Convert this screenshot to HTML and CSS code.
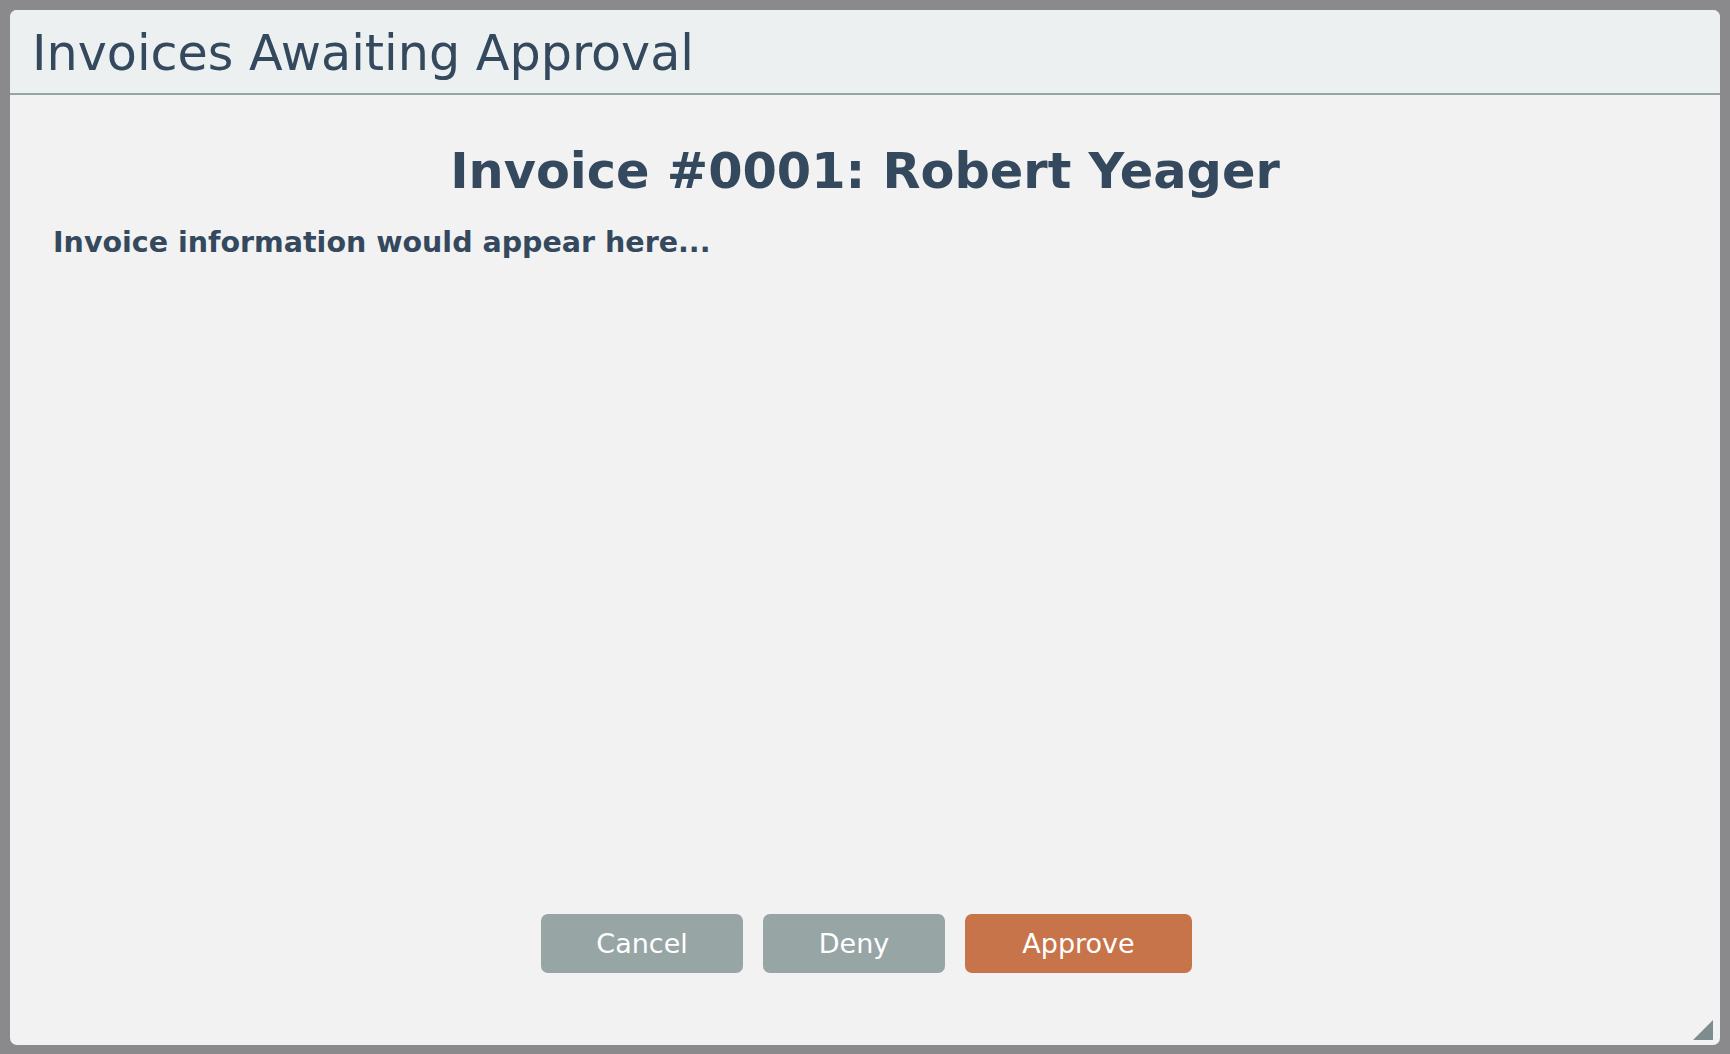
FILE: index.html
```html
<!DOCTYPE html>
<html lang="en">
<head>
<meta charset="utf-8">
<title>Invoices Awaiting Approval</title>
<link rel="stylesheet" href="styles.css">
</head>
<body>
<div class="dialog">
  <div class="dialog-header">
    <h1 class="dialog-title">Invoices Awaiting Approval</h1>
  </div>
  <div class="dialog-body">
    <h2 class="invoice-title">Invoice #0001: Robert Yeager</h2>
    <p class="invoice-info">Invoice information would appear here...</p>
  </div>
  <div class="dialog-footer">
    <button class="btn btn-muted">Cancel</button>
    <button class="btn btn-muted btn-deny">Deny</button>
    <button class="btn btn-primary">Approve</button>
  </div>
  <div class="resize-handle"></div>
</div>
</body>
</html>
```
FILE: styles.css
```css
html, body {
  margin: 0;
  padding: 0;
  height: 100%;
}
body {
  background: #8a8a8c;
  font-family: "DejaVu Sans", Verdana, sans-serif;
  color: #34495e;
  padding: 10px;
  box-sizing: border-box;
}
.dialog {
  position: relative;
  height: 1035px;
  background: #f2f2f2;
  border-radius: 7px;
  overflow: hidden;
  display: flex;
  flex-direction: column;
}
.dialog-header {
  background: #ecf0f1;
  border-bottom: 2px solid #95a5a6;
  padding: 15px 22px 0;
  height: 68px;
}
.dialog-title {
  margin: 0;
  font-size: 49.2px;
  font-weight: normal;
  line-height: 57px;
  color: #34495e;
}
.dialog-body {
  flex: 1;
  padding: 48px 43px 0;
}
.invoice-title {
  margin: 0;
  text-align: center;
  font-size: 49.4px;
  font-weight: bold;
  line-height: 57px;
}
.invoice-info {
  margin: 26px 0 0;
  font-size: 28.5px;
  font-weight: bold;
  line-height: 33px;
}
.dialog-footer {
  display: flex;
  justify-content: center;
  gap: 20px;
  padding-bottom: 72px;
  padding-left: 3px;
}
.btn {
  height: 59px;
  padding: 0 55px;
  border: none;
  border-radius: 7px;
  font-family: "DejaVu Sans", Verdana, sans-serif;
  font-size: 27px;
  color: #ffffff;
  cursor: pointer;
}
.btn-muted {
  background: #97a5a5;
}
.btn-deny {
  padding: 0 56px;
}
.btn-primary {
  background: #c8744a;
  padding: 0 57px;
}
.resize-handle {
  position: absolute;
  right: 7px;
  bottom: 5px;
  width: 0;
  height: 0;
  border-left: 20px solid transparent;
  border-bottom: 20px solid #7f8c8d;
}
```
